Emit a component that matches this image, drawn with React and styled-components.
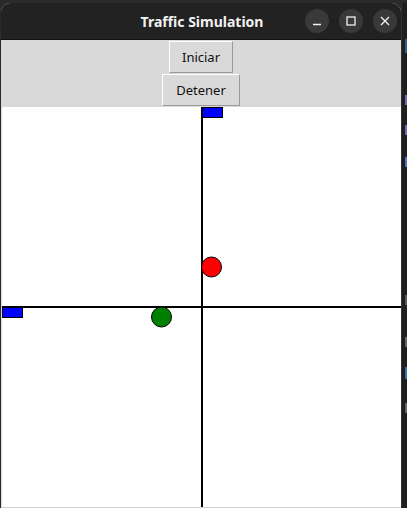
import styled, { createGlobalStyle } from 'styled-components'

const GlobalStyle = createGlobalStyle`
  html, body {
    margin: 0;
    padding: 0;
    background: #2a2a2a;
  }
`

const Desktop = styled.div`
  display: flex;
  width: 407px;
  height: 508px;
  overflow: hidden;
  background: #2a2a2a;
`

const Window = styled.div`
  display: flex;
  flex-direction: column;
  width: 401px;
  margin: 3px 0 0 1px;
  border-radius: 9px 9px 0 0;
  overflow: hidden;
  background: #d9d9d9;
`

const TitleBar = styled.div`
  position: relative;
  display: flex;
  align-items: center;
  justify-content: center;
  height: 36px;
  flex-shrink: 0;
  background: #222222;
  border-bottom: 1px solid #111;
`

const Title = styled.span`
  font-family: 'Noto Sans', 'DejaVu Sans', sans-serif;
  font-weight: 700;
  font-size: 14px;
  color: #f2f2f2;
  margin-left: 2px;
`

const WindowControls = styled.div`
  position: absolute;
  right: 4px;
  top: 6px;
  display: flex;
  gap: 10px;
`

const ControlButton = styled.div`
  display: flex;
  align-items: center;
  justify-content: center;
  width: 24px;
  height: 24px;
  border-radius: 50%;
  background: #393939;
`

const Toolbar = styled.div`
  display: flex;
  flex-direction: column;
  align-items: center;
  gap: 1px;
  padding: 1px 0 1px;
  background: #d9d9d9;
`

const TkButton = styled.button`
  height: 32px;
  padding: 0 ${(p) => p.$pad}px;
  box-sizing: border-box;
  background: #d9d9d9;
  border: 1px solid;
  border-color: #ffffff #9a9a9a #9a9a9a #ffffff;
  font-family: 'Noto Sans', 'DejaVu Sans', sans-serif;
  font-size: 13px;
  color: #111;
  line-height: 1;
`

const Canvas = styled.div`
  height: 400px;
  background: #ffffff;
  border-left: 1px solid #d9d9d9;
  border-bottom: 1px solid #d0d0d0;
`

const EditorStrip = styled.div`
  display: flex;
  flex-direction: column;
  align-items: flex-end;
  width: 5px;
  margin-top: 3px;
  background: #1f1f1f;
  border-left: 1px solid #333;
`

const CodeBit = styled.div`
  width: 2px;
  height: ${(p) => p.$h}px;
  margin-top: ${(p) => p.$top}px;
  background: ${(p) => p.$c};
`

export default function App() {
  return (
    <>
      <GlobalStyle />
      <Desktop>
        <Window>
          <TitleBar>
            <Title>Traffic Simulation</Title>
            <WindowControls>
              <ControlButton>
                <svg width="10" height="10" viewBox="0 0 10 10">
                  <path d="M1 8.5h8" stroke="#eee" strokeWidth="1.3" />
                </svg>
              </ControlButton>
              <ControlButton>
                <svg width="10" height="10" viewBox="0 0 10 10">
                  <rect x="1" y="1" width="8" height="8" fill="none" stroke="#eee" strokeWidth="1.3" />
                </svg>
              </ControlButton>
              <ControlButton>
                <svg width="10" height="10" viewBox="0 0 10 10">
                  <path d="M1 1l8 8M9 1l-8 8" stroke="#eee" strokeWidth="1.4" />
                </svg>
              </ControlButton>
            </WindowControls>
          </TitleBar>
          <Toolbar>
            <TkButton $pad={12}>Iniciar</TkButton>
            <TkButton $pad={13}>Detener</TkButton>
          </Toolbar>
          <Canvas>
            <svg width="400" height="400" viewBox="0 0 400 400">
              <line x1="200" y1="0" x2="200" y2="400" stroke="#000" strokeWidth="2" />
              <line x1="0" y1="200" x2="400" y2="200" stroke="#000" strokeWidth="2" />
              <rect x="200.5" y="0.5" width="20" height="10" fill="#0000ff" stroke="#000" />
              <rect x="0.5" y="200.5" width="20" height="10" fill="#0000ff" stroke="#000" />
              <circle cx="209.5" cy="160" r="10" fill="#ff0000" stroke="#000" />
              <circle cx="159.5" cy="210" r="10" fill="#008000" stroke="#000" />
            </svg>
          </Canvas>
        </Window>
        <EditorStrip>
          <CodeBit $top={36} $h={14} $c="#2a5f90" />
          <CodeBit $top={42} $h={10} $c="#7a62c0" />
          <CodeBit $top={20} $h={10} $c="#7a62c0" />
          <CodeBit $top={22} $h={10} $c="#5570c8" />
          <CodeBit $top={128} $h={10} $c="#5a5a5a" />
          <CodeBit $top={32} $h={10} $c="#666" />
          <CodeBit $top={20} $h={12} $c="#3570b8" />
          <CodeBit $top={24} $h={10} $c="#666" />
        </EditorStrip>
      </Desktop>
    </>
  )
}
